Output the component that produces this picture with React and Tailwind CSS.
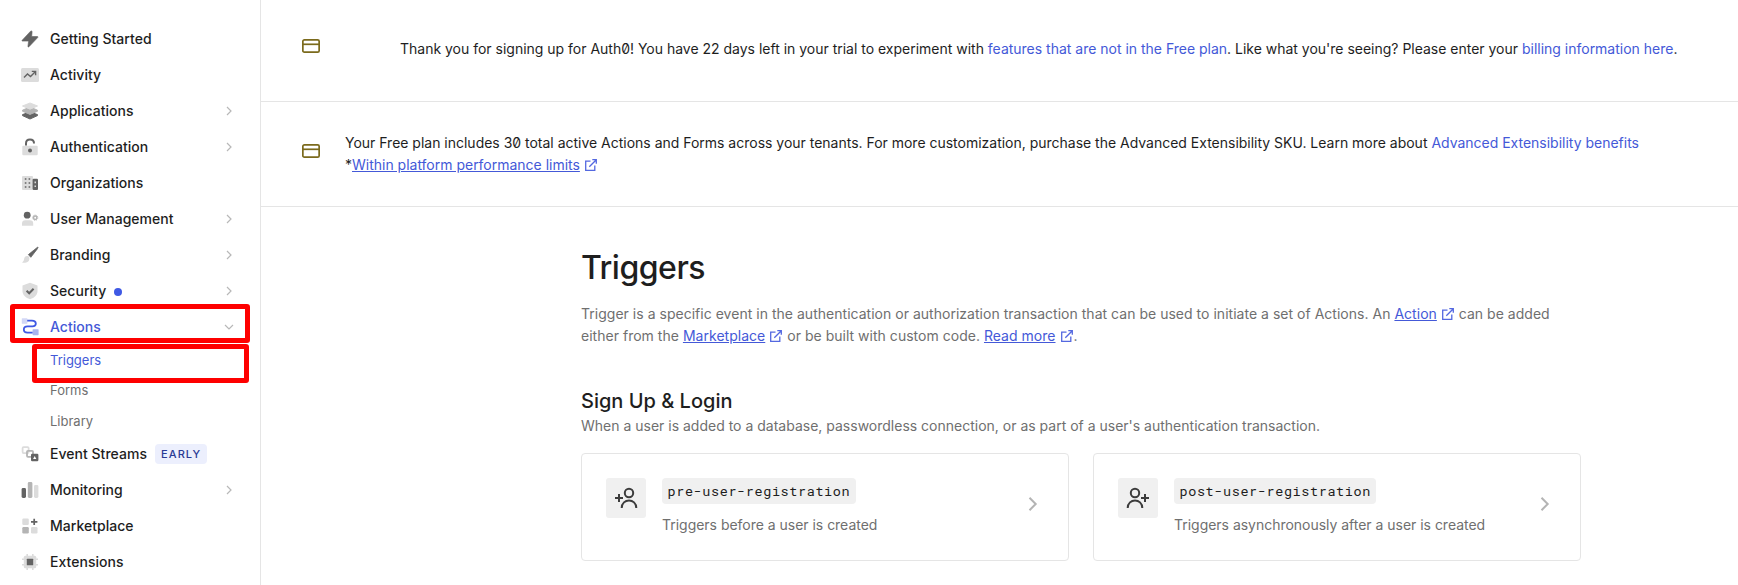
import React from 'react';

const ActivityIcon = () => (
    <svg width="20" height="20" viewBox="0 0 20 20" fill="none">
        <rect x="1" y="3" width="18" height="14" rx="1.5" fill="#dcdcdc" />
        <path d="M4 12.5L7.5 9L10.5 11.5L15 7" stroke="#636363" strokeWidth="1.4" />
        <path d="M11.8 6.4H15.6V10.2" stroke="#636363" strokeWidth="1.4" />
    </svg>
);

const BoltIcon = () => (
    <svg width="20" height="20" viewBox="0 0 20 20">
        <path d="M10.6 2.2L2.2 11.2C1.8 11.7 2 12.1 2.6 12.1H8.6L7.9 17.4C7.9 18 8.6 18.1 9 17.7L17.7 8.6C18.2 8 17.9 7.5 17.3 7.5H11.7L12.1 2.7C12.1 1.9 11.2 1.6 10.6 2.2Z" fill="#636363" stroke="#636363" strokeWidth="0.6" />
    </svg>
);

const LayersIcon = () => (
    <svg width="20" height="20" viewBox="0 0 20 20">
        <path d="M2.5 13.6L10 11L17.5 13.6V14.6L10 18L2.5 14.6Z" fill="#636363" stroke="#636363" strokeLinejoin="round" />
        <path d="M2.5 9.2L10 6L17.5 9.2V10.2L10 13.4L2.5 10.2Z" fill="#b4b4b4" stroke="#b4b4b4" strokeLinejoin="round" />
        <path d="M10 2L17.5 5L10 8.2L2.5 5Z" fill="#dcdcdc" stroke="#dcdcdc" strokeLinejoin="round" />
    </svg>
);

const LockIcon = () => (
    <svg width="20" height="20" viewBox="0 0 20 20" fill="none">
        <rect x="2.3" y="8.8" width="15.4" height="9.4" rx="1" fill="#dcdcdc" />
        <path d="M6 8.4V6.4C6 1.3 14 1.3 14 6.4" stroke="#636363" strokeWidth="2" />
        <circle cx="10" cy="13.5" r="2" fill="#636363" />
    </svg>
);

const BuildingIcon = () => (
    <svg width="20" height="20" viewBox="0 0 20 20">
        <rect x="2" y="3" width="11" height="14" rx="1" fill="#dcdcdc" />
        <rect x="12.6" y="5.8" width="5.4" height="11.2" rx="1" fill="#636363" />
        <path d="M4.8 5.2h1.6v1.6h-1.6zM8.6 5.2h1.6v1.6h-1.6zM4.8 9.2h1.6v1.6h-1.6zM8.6 9.2h1.6v1.6h-1.6zM4.8 13.2h1.6v1.6h-1.6zM8.6 13.2h1.6v1.6h-1.6z" fill="#636363" />
        <path d="M14.5 8.5h1.5v1.7h-1.5zM14.5 12.4h1.5v1.7h-1.5z" fill="#dcdcdc" />
    </svg>
);

const UsersIcon = () => (
    <svg width="20" height="20" viewBox="0 0 20 20" fill="none">
        <path d="M2 16.7V14.5C2 12.3 3.3 11.3 5.2 11.3H10C12 11.3 13.2 12.3 13.2 14.5V16.7Z" fill="#dcdcdc" />
        <circle cx="7.2" cy="6.2" r="3.4" fill="#636363" />
        <circle cx="15.2" cy="8.7" r="1.7" stroke="#b4b4b4" strokeWidth="1.5" />
        <circle cx="15.2" cy="8.7" r="2.6" stroke="#b4b4b4" strokeWidth="1" strokeDasharray="1 1.04" />
    </svg>
);

const BrushIcon = () => (
    <svg width="20" height="20" viewBox="0 0 20 20">
        <path d="M17.8 2L8.4 9.6L10.8 12.3L17.1 4.2C17.8 3.2 18.3 2.2 17.8 2Z" fill="#636363" stroke="#636363" strokeWidth="0.8" strokeLinejoin="round" />
        <path d="M7.4 11C5 10.9 4.3 12.5 4.1 14C4 15.4 3.2 16.6 2 17.4C5 18.3 9.4 17.6 9.4 13.4C9.4 12.1 8.7 11.1 7.4 11Z" fill="#dcdcdc" />
    </svg>
);

const ShieldIcon = () => (
    <svg width="20" height="20" viewBox="0 0 20 20" fill="none">
        <path d="M10 1.8L17.5 4.6V10C17.5 14 14.5 16.8 10 18.2C5.5 16.8 2.5 14 2.5 10V4.6Z" fill="#dcdcdc" />
        <path d="M6.6 9.8L9.2 12.3L13.6 7.8" stroke="#636363" strokeWidth="2" />
    </svg>
);

const ActionsIcon = () => (
    <svg width="20" height="20" viewBox="0 0 20 20" fill="none">
        <rect x="1.8" y="1.2" width="5.6" height="5.6" rx="0.6" fill="#d3d8f6" />
        <rect x="12.6" y="12.2" width="6" height="6" rx="0.6" fill="#a9b4ee" />
        <path d="M7.2 3.7H12C17 3.7 17 9.4 12.5 9.4H7.5C2.6 9.4 2.6 15.6 7.5 15.6H12.6" stroke="#3f59e4" strokeWidth="1.8" />
    </svg>
);

const StreamsIcon = () => (
    <svg width="20" height="20" viewBox="0 0 20 20" fill="none">
        <rect x="2.6" y="3.1" width="6" height="6" rx="1" stroke="#dcdcdc" strokeWidth="1.8" />
        <rect x="7" y="6.8" width="6" height="6" rx="1" stroke="#b4b4b4" strokeWidth="1.8" />
        <rect x="11" y="9.8" width="7.4" height="7.4" rx="1.2" fill="#636363" />
        <path d="M14.7 12L16.3 14.9H13.1Z" fill="#fff" />
    </svg>
);

const BarsIcon = () => (
    <svg width="20" height="20" viewBox="0 0 20 20">
        <rect x="1.6" y="8" width="4.4" height="10" rx="1.4" fill="#636363" />
        <rect x="7.8" y="2" width="4.6" height="16" rx="1.4" fill="#b4b4b4" />
        <rect x="14" y="5" width="4.4" height="13" rx="1.4" fill="#dcdcdc" />
    </svg>
);

const MarketplaceIcon = () => (
    <svg width="20" height="20" viewBox="0 0 20 20">
        <rect x="2.3" y="2.5" width="6.5" height="6.5" rx="1.2" fill="#dcdcdc" />
        <rect x="2.3" y="11" width="6.5" height="6.5" rx="1.2" fill="#b4b4b4" />
        <rect x="11" y="11" width="6.5" height="6.5" rx="1.2" fill="#dcdcdc" />
        <path d="M14.2 2.7V9M11 5.85H17.4" stroke="#636363" strokeWidth="1.7" />
    </svg>
);

const ChipIcon = () => (
    <svg width="20" height="20" viewBox="0 0 20 20">
        <path d="M7.2 2V18M12.8 2V18M2 7.2H18M2 12.8H18" stroke="#dcdcdc" strokeWidth="1.6" />
        <rect x="3.8" y="3.8" width="12.4" height="12.4" rx="1.5" fill="#dcdcdc" />
        <rect x="6.8" y="6.8" width="6.4" height="6.4" rx="0.5" fill="#636363" />
    </svg>
);

const ExternalIcon = () => (
    <svg className="inline-block ml-[5px] mr-px -mt-[3px]" width="12" height="12" viewBox="0 0 12 12" fill="none" stroke="#5468e0" strokeWidth="1.3">
        <path d="M5.5 2.2H0.7V11.3H9.8V6.5" />
        <path d="M7.3 0.7H11.3V4.7M11.3 0.7L4.3 7.7" />
    </svg>
);

const CardIcon = () => (
    <svg width="18" height="14" viewBox="0 0 18 14" fill="none" stroke="#7b6a1c" strokeWidth="1.7">
        <rect x="0.85" y="0.85" width="16.3" height="12.3" rx="1.5" />
        <path d="M1 5.3H17" />
    </svg>
);

const PersonIcon = ({ plusLeft }) => (
    <svg width="24" height="24" viewBox="0 0 24 24" fill="none" stroke="#3c3c3c" strokeWidth="2">
        {plusLeft ? (
            <>
                <circle cx="15" cy="7" r="4.2" />
                <path d="M7.7 22C7.7 12 22.3 12 22.3 22" />
                <path d="M5 8V16M1 12H9" />
            </>
        ) : (
            <>
                <circle cx="9" cy="7" r="4.2" />
                <path d="M1.7 22C1.7 12 16.3 12 16.3 22" />
                <path d="M19 8V16M15 12H23" />
            </>
        )}
    </svg>
);

const Chevron = ({ open }) => (
    <svg width="10" height="10" viewBox="0 0 10 10" fill="none" stroke="#b8b8b8" strokeWidth="1.2">
        {open ? <path d="M1 3L5 7L9 3" /> : <path d="M3 1L7 5L3 9" />}
    </svg>
);

const mainItems = [
    { label: 'Getting Started', icon: BoltIcon },
    { label: 'Activity', icon: ActivityIcon },
    { label: 'Applications', icon: LayersIcon, expandable: true },
    { label: 'Authentication', icon: LockIcon, expandable: true },
    { label: 'Organizations', icon: BuildingIcon },
    { label: 'User Management', icon: UsersIcon, expandable: true },
    { label: 'Branding', icon: BrushIcon, expandable: true },
    { label: 'Security', icon: ShieldIcon, expandable: true, dot: true },
    { label: 'Actions', icon: ActionsIcon, expandable: true, active: true },
];

const lowerItems = [
    { label: 'Event Streams', icon: StreamsIcon, badge: 'EARLY' },
    { label: 'Monitoring', icon: BarsIcon, expandable: true },
    { label: 'Marketplace', icon: MarketplaceIcon },
    { label: 'Extensions', icon: ChipIcon },
];

const NavItem = ({ item }) => {
    const Icon = item.icon;
    return (
        <a className={`flex h-9 items-center pl-5 pr-[26px] font-[450] tracking-[0.03px] ${item.active ? 'text-[#4459d8]' : 'text-[#1e1e1e]'}`}>
            <Icon />
            <span className="ml-2.5">{item.label}</span>
            {item.dot && <span className="ml-2 mt-0.5 h-2 w-2 rounded-full bg-[#3f59e4]" />}
            {item.badge && (
                <span className="ml-2 flex h-5 items-center rounded bg-[#eceffd] px-1.5 text-[11px] font-medium tracking-[1.1px] text-[#2a3a94]">{item.badge}</span>
            )}
            {item.expandable && <span className="ml-auto"><Chevron open={item.active} /></span>}
        </a>
    );
};

const Sidebar = () => (
    <aside className="relative h-full w-[261px] shrink-0 border-r border-[#e5e5e5] pt-[21px]">
        {mainItems.map((item) => <NavItem key={item.label} item={item} />)}
        <div className="flex h-[91px] flex-col pl-[50px] text-[13px] text-[#6f6f6f]">
            <a className="flex flex-1 items-center text-[#4459d8]">Triggers</a>
            <a className="flex flex-1 items-center">Forms</a>
            <a className="flex flex-1 items-center">Library</a>
        </div>
        {lowerItems.map((item) => <NavItem key={item.label} item={item} />)}

        {/* highlight boxes over the current section */}
        <div className="absolute left-[10px] top-[304px] h-[39px] w-[240px] rounded-[3px] border-[5px] border-[#fe0000]" />
        <div className="absolute left-[32px] top-[344px] h-[39px] w-[217px] rounded-[3px] border-[5px] border-[#fe0000]" />
    </aside>
);

const Link = ({ children, external }) => (
    <>
        <a className={external ? 'text-[#4459d8] underline underline-offset-1' : 'text-[#4459d8]'}>{children}</a>
        {external && <ExternalIcon />}
    </>
);

const TriggerCard = ({ name, description, plusLeft }) => (
    <div className="flex h-[108px] flex-1 items-start rounded border border-[#e5e5e5] p-6">
        <div className="flex h-10 w-10 items-center justify-center rounded-[3px] bg-[#f0f0f0]">
            <PersonIcon plusLeft={plusLeft} />
        </div>
        <div className="ml-4 flex flex-col items-start">
            <code className="flex h-[26px] items-center rounded bg-[#f0f0f0] px-[5.5px] font-['Roboto_Mono','DejaVu_Sans_Mono',monospace] text-[13.5px] tracking-[0.6px] text-[#1e1e1e]">{name}</code>
            <p className="mt-[10px] leading-[22px] tracking-[-0.02px] text-[#6f6f6f]">{description}</p>
        </div>
        <svg className="ml-auto mr-1.5 mt-[19px]" width="10" height="14" viewBox="0 0 10 14" fill="none" stroke="#b4b4b4" strokeWidth="2">
            <path d="M1.5 0.8L7.7 7L1.5 13.2" />
        </svg>
    </div>
);

const App = () => {
    return (
        <div className="flex h-[585px] overflow-hidden bg-white font-['Inter',sans-serif] text-[14px] leading-[22px] text-[#1e1e1e]">
            <Sidebar />
            <main className="min-w-0 flex-1 whitespace-nowrap">
                <div className="flex h-[102px] border-b border-[#e5e5e5] pl-[41px] pt-[38px] slashed-zero tracking-[-0.008px]">
                    <div className="mt-px"><CardIcon /></div>
                    <p className="ml-[80px]">
                        Thank you for signing up for Auth0! You have 22 days left in your trial to experiment with <Link>features that are not in the Free plan</Link>. Like what you're seeing? Please enter your <Link>billing information here</Link>.
                    </p>
                </div>
                <div className="flex h-[105px] border-b border-[#e5e5e5] pl-[41px] pt-[30px] slashed-zero tracking-[-0.01px]">
                    <div className="mt-3"><CardIcon /></div>
                    <p className="ml-[25px]">
                        Your Free plan includes 30 total active Actions and Forms across your tenants. For more customization, purchase the Advanced Extensibility SKU. Learn more about <Link>Advanced Extensibility benefits</Link>
                        <br />
                        *<Link external>Within platform performance limits</Link>
                    </p>
                </div>
                <div className="ml-[320px] w-[1000px] pt-10">
                    <h1 className="text-[32px] font-medium leading-[42px] tracking-[-0.5px]">Triggers</h1>
                    <p className="mt-[14px] tracking-[0.022px] text-[#6f6f6f]">
                        Trigger is a specific event in the authentication or authorization transaction that can be used to initiate a set of Actions. An <Link external>Action</Link> can be added
                        <br />
                        either from the <Link external>Marketplace</Link> or be built with custom code. <Link external>Read more</Link>.
                    </p>
                    <h2 className="mt-10 text-[20px] font-medium leading-7">Sign Up &amp; Login</h2>
                    <p className="text-[#6f6f6f]">When a user is added to a database, passwordless connection, or as part of a user's authentication transaction.</p>
                    <div className="mt-4 flex gap-6">
                        <TriggerCard name="pre-user-registration" description="Triggers before a user is created" plusLeft />
                        <TriggerCard name="post-user-registration" description="Triggers asynchronously after a user is created" />
                    </div>
                </div>
            </main>
        </div>
    );
};

export default App;
